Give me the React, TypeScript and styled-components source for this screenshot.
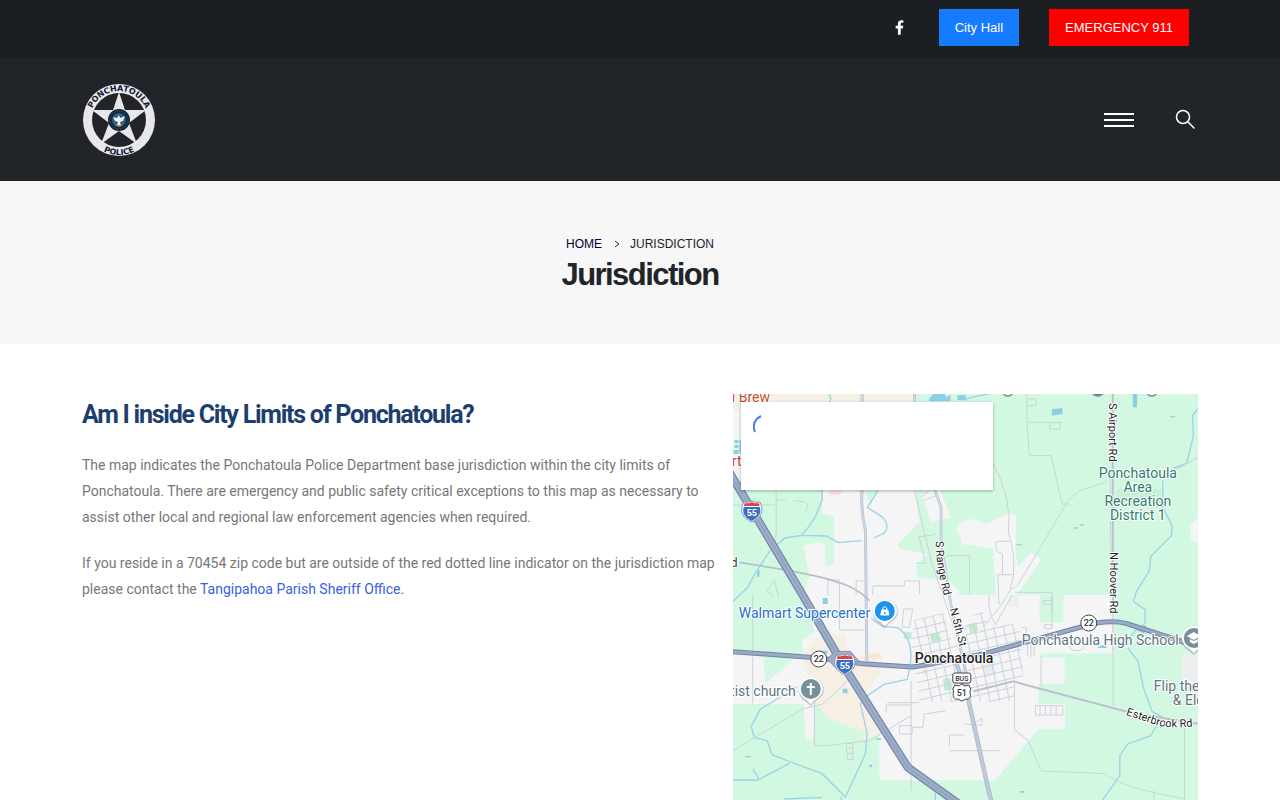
import React from "react";
import styled, { createGlobalStyle } from "styled-components";

const GlobalStyle = createGlobalStyle`
  * { box-sizing: border-box; }
  body {
    margin: 0;
    background: #fff;
    color: #777;
    font-family: Roboto, "Liberation Sans", sans-serif;
    font-size: 14px;
    line-height: 26px;
  }
  a { text-decoration: none; }
`;

const Container = styled.div`
  width: 100%;
  max-width: 1140px;
  margin: 0 auto;
  padding: 0 12px;
`;

const TopBar = styled.div`
  background: #1c1f22;
  padding: 9px 0 12px;
`;

const TopBarRow = styled(Container)`
  display: flex;
  justify-content: flex-end;
  align-items: center;
  padding-right: 21px;
`;

const SocialLink = styled.a`
  display: flex;
  align-items: center;
  justify-content: center;
  width: 30px;
  height: 36px;
  margin-right: 24px;
  color: #fff;
`;

const TopButton = styled.a<{ $tone: string }>`
  padding: 0 16px;
  background: ${(p) => p.$tone};
  color: #fff;
  font: 13px/37px "Liberation Sans", sans-serif;
  & + & { margin-left: 30px; }
`;

const Header = styled.header`
  background: #212529;
`;

const HeaderRow = styled(Container)`
  display: flex;
  align-items: center;
  min-height: 123px;
`;

const LogoLink = styled.a`
  display: flex;
  margin-right: auto;
`;

const IconButton = styled.button`
  display: flex;
  padding: 0;
  border: 0;
  background: none;
  color: #fff;
  cursor: pointer;
`;

const MenuButton = styled(IconButton)`
  flex-direction: column;
  gap: 4px;
  width: 30px;
  margin-right: 41px;
  span { height: 2px; width: 100%; background: #fff; }
`;

const SearchButton = styled(IconButton)`
  margin-right: 2px;
`;

const PageHeader = styled.section`
  display: flex;
  flex-direction: column;
  align-items: center;
  padding: 50px 0 51px;
  background: #f7f7f7;
  color: #212529;
`;

const Breadcrumb = styled.nav`
  display: flex;
  align-items: center;
  font: 12px/26px "Liberation Sans", sans-serif;
  text-transform: uppercase;
  a { color: #000033; }
  svg { margin: 0 10px 0 12px; }
`;

const PageTitle = styled.h1`
  margin: 0;
  font: bold 31px/36px "Liberation Sans", sans-serif;
  letter-spacing: -0.05em;
`;

const ContentRow = styled.main`
  display: grid;
  grid-template-columns: minmax(0, 4fr) minmax(0, 3fr);
  width: 100%;
  max-width: 1140px;
  margin: 0 auto;
  padding: 50px 0;
`;

const Column = styled.div`
  padding: 0 12px;
`;

const TextColumn = styled.div`
  padding-left: 12px;
`;

const SectionTitle = styled.h2`
  margin: 0 0 16px;
  color: #1c3f70;
  font-size: 25px;
  font-weight: 700;
  line-height: 42px;
  letter-spacing: -0.05em;
`;

const Paragraph = styled.p`
  margin: 0 0 20px;
  a { color: #3a5fe0; }
`;

const MapFrame = styled.div`
  position: relative;
  height: 450px;
  overflow: hidden;
  background: #d3f8e2;
`;

const MapDrawing = styled.svg`
  display: block;
  width: 100%;
  height: 100%;
  font-family: Roboto, sans-serif;
`;

const InfoCard = styled.div`
  position: absolute;
  top: 8px;
  left: 8px;
  width: 252px;
  height: 88px;
  padding: 12px;
  background: #fff;
  box-shadow: 0 1px 3px rgba(0, 0, 0, 0.3);
  svg { display: block; }
`;

const Label = styled.text<{ $size?: number; $weight?: number }>`
  font-size: ${(p) => p.$size ?? 14}px;
  font-weight: ${(p) => p.$weight ?? 400};
  paint-order: stroke;
  stroke: #fff;
  stroke-width: 2px;
  stroke-linejoin: round;
`;

function Logo() {
  return (
    <svg width="74" height="74" viewBox="0 0 74 74" role="img" aria-label="Ponchatoula Police">
      <defs>
        <path id="logo-top" d="M8 37a29 29 0 0 1 58 0" />
        <path id="logo-bottom" d="M2 37a35 35 0 0 0 70 0" />
      </defs>
      <circle cx="37" cy="37" r="36" fill="#e8e8ea" />
      <circle cx="37" cy="37" r="27" fill="#212529" />
      <path d="M37 9l6 18h21L47 40l8 21-18-13-18 13 8-21-17-13h21z" fill="#e8e8ea" />
      <circle cx="37" cy="37" r="11" fill="#122536" />
      <circle cx="37" cy="37" r="9" fill="none" stroke="#46647d" strokeWidth="1" strokeDasharray="1 1" />
      <circle cx="37" cy="37" r="7" fill="#275f8e" />
      <path d="M31 34l4 1 2-3 1 3 5-2-2 5-3 1 1 3h-4l1-3-3-1z" fill="#f3efe4" />
      <path d="M33 42h8l-4 2z" fill="#bd8547" />
      <g fill="#101737" fontFamily="DejaVu Sans, sans-serif" fontWeight="bold" fontSize="8" textAnchor="middle">
        <text>
          <textPath href="#logo-top" startOffset="50%">PONCHATOULA</textPath>
        </text>
        <text>
          <textPath href="#logo-bottom" startOffset="50%">POLICE</textPath>
        </text>
      </g>
    </svg>
  );
}

function Pin({ x, y, color, children }: { x: number; y: number; color: string; children: React.ReactNode }) {
  return (
    <g transform={`translate(${x} ${y})`}>
      <path d="M-12 1C-12-16 13-16 13 1c0 6-5 9-8 11l-5 5-5-4c-4-3-7-6-7-12z" fill="#777" opacity=".35" />
      <path d="M-12 0a12 12 0 0 1 24 0c0 6-5 9-8 11l-4 4-4-4c-3-2-8-5-8-11z" fill="#fff" />
      <circle r="10" fill={color} />
      {children}
    </g>
  );
}

function Interstate({ x, y }: { x: number; y: number }) {
  return (
    <g transform={`translate(${x} ${y})`}>
      <path d="M-8-9q4 1 8-1 4 2 8 1c5 9 1 16-8 20C-9 7-13 0-8-9z" fill="#fff" stroke="#8b97aa" strokeWidth="1" />
      <path d="M-8-4H8C10 3 6 7 0 10-6 7-10 3-8-4z" fill="#3b70c4" />
      <path d="M-7-8q4 1 7-1 3 2 7 1l1 3H-8z" fill="#d8464b" />
      <text y="5" textAnchor="middle" fontSize="9" fontWeight="700" fill="#fff">55</text>
    </g>
  );
}

function RouteCircle({ x, y }: { x: number; y: number }) {
  return (
    <g transform={`translate(${x} ${y})`}>
      <circle r="8" fill="#fff" stroke="#444" strokeWidth="1" />
      <text y="3" textAnchor="middle" fontSize="9" fontWeight="500" fill="#333">22</text>
    </g>
  );
}

const columns = Array.from({ length: 12 }, (_, i) => i);
const rows = Array.from({ length: 13 }, (_, i) => i);

/* Land, water and streets are plotted at three units to the pixel. */
function Terrain() {
  return (
    <g transform="scale(.33333)">
      <g fill="#f5f5f6">
        <path d="M0 0h540v25H0zM0 25h30v25H0z" fill="#f5f0e5" />
        <path d="M0 50h30v182H0zM0 170h25v110H0z" />
        <path d="M268 280H545l15 105-65 65 5 15 85 15-35 30 5 42 90 5 50 50H205l25-60-18-92 48-12 16 12 2 60 26-4V368l-37-10z" />
        <path d="M395 288h45l-28 42z" fill="#d3f8e2" />
        <path d="M565 300l55-15 35 85-60 15z" />
        <path d="M670 405q25-50 90-15l70-33 20 10-2 105 8 48 40-45 30 20-75 110 20 60H730l-25-70-20-160z" />
        <path d="M696 450l85 15 8 140h-110l-20-115z" fill="#d3f8e2" />
        <path d="M1395 375l-22 15 2 48 20 12z" />
      </g>
      <g transform="translate(0 603)">
        <path d="M215 0h930v175H925v13h70v78h-78v60h80v75h-80l-130 155H440V415l-195-55-5 75-22-5-5-103H0V172l92 15 5 80 115-100-5-30 38-27z" fill="#f5f5f6" />
        <path d="M920-10h72v92h-72zM992 325h-72v-50h5z" fill="#d3f8e2" />
        <path d="M245 130l90-15 15 65 80 10 15 45-60 75 60 105-45 20-150-65-10-100-35-80z" fill="#f6efe4" />
        <path d="M245 320l40 48 120 48-50 25-110 12z" fill="#d3f8e2" />
        <path d="M1346 175h49v90h-49z" fill="#eceeef" />
        <path d="M830 0h28v36h-32z" fill="#eceeef" />
        <path d="M590 118l28-6 8 24-28 8zM630 253l22-5 8 35-24 5zM706 88l25-5 5 25-24 8zM514 112h22v20h-22z" fill="#bfecd0" />
        <path d="M746 210l36-7 8 36-34 9z" fill="#e9ebee" />
        <path d="M568 225h20v12h-20zM404 180l32-10 15 20-30 5z" fill="#f8e9d4" />
      </g>
      <path d="M1150 285h135v55h-135z" fill="#c5f1d7" />
      <path d="M290 290h35v12h-35z" fill="#f8dedb" />

      <g fill="#8bcfe4">
        <path d="M590 12l12-12h34l5 10 12-8v20h-65zM674 4h25v15h-25zM957 46l32-4v18l-32 5zM1200 0h13v40h-13zM1308 68l22-3-9 6zM1018 402l18-4-4 8zM1038 394l14-5-1 8zM848 451h20v3h-20z" />
        <path d="M5 138h12v10H5zM5 153h12v10H5zM2 168h16v12H2zM20 138h8v40h-8z" />
        <path d="M270 612h15v18h-15zM262 770h22v10h-22zM330 884h14v14h-14zM36 1086h18v4H36zM430 1033h16v4h-16zM409 1112h9v7h-9zM1094 762q15-18 30 0zM1240 692l-30 15 24 14zM73 528h7v20h-7zM862 1191h12v5h-12z" />
      </g>
      <g fill="none" stroke="#9bd3e6" strokeWidth="4">
        <path d="M268 288v30l-20 50-20 30-22 26-50 8-46 40-45 70-20 38-45 43M206 424l75 2 35 20 70-6M436 290l-32 50 46 30q25 30 0 50l-28 12" />
        <path d="M696 16l30-8 40-8M1394 45l-15 20 3 60-20 82-40 16M1290 260v80l28 55-2 30-62 62-5 45-38 60-9 30 35 25v40l-30 23-28 35M1185 762l31 40 16 80 26 70 30 18-35 55-68 25-24 35v60l-48 68-22 50" />
        <path d="M415 673l35 25 45 3q60 40 28 155l-70 15-50 35-20 23 20 90-5 60-60 130-70-70-95-35-55-22-15-42-38-10-10-33 28-52 60-36M0 1158h75l95-50M60 1125l18 28M325 1208v35M155 1215l110-5v3M608 1185v55" />
        <path d="M290 0l4 15-8 20M0 0l20-2" />
      </g>

      <g fill="none" stroke="#cbd2dc" strokeWidth="3">
        <path d="M130 285v135l-5 45M0 333h125M130 318h28M182 320q60 2 35 35M125 560l-22 30 20 20M125 560l12 50M285 603v-45h35v45M370 603v-42h22M420 603v-27h95v-15h45v40M550 508h27v-5l-18-74 50-8M545 290l50 210 70 205M565 310l25-20M570 320l48-18M640 485h70v115" />
        <path d="M882 0v85l8 100h65l33 145h22M887 85h96v20h-32V86M887 15h22v20h-22M780 205q60 115 47 210 20 60 15 130l-10 40M832 542h-37l4 90M790 442h40M790 442v28l19 10v62h35M847 595h110v60" />
        <path d="M1123 262l-85 30-30 25-155 260-20 10-30 50-50 60M1132 255l2 230M1141 645v290M1141 770V650M1395 190l-62 35" />
        <path d="M60 603v325M245 1055V900M0 1070l210-125 60-15 60-55q10-15 28-35M245 1055h35l130-15M340 1048h20v48h-15zM345 1062h18M345 1078h18M410 1040l125-75M500 995h38v25h-38zM460 955v-22h75M535 860v330M540 1000h30l5-40 65-10M650 1055v-32h46M650 1070h150M320 603v105M320 708h80M512 645h28l-10 55h-22z" />
        <path d="M925 785v90M958 603v92M931 620h28v12h-28zM935 692h22v12h-22zM845 868v140l40 30 40 93 190 8q60 45 240 75M1355 1000v240M908 935h82v28h-82zM922 935v28M938 935v28M954 935v28M970 935v28M1264 1190v55M1012 755q-5 15 25 15 20-2 15-18" />
        <path d="M770 603q-8 45 18 90L838 603M155 905q40-5 50-25h-38M696 990l52 4-1-20-25 15M871 735h25l-2 55M884 735v50M904 740v48M463 926h96M866 700h15v30" />
      </g>
      <clipPath id="grid-clip">
        <path d="M546 678l85-20 25 80h45l-5-50 30-5-5-20 30-10 15 47 75-10 19 10 11 148-30 10 5 65H561l-25-183z" />
      </clipPath>
      <g clipPath="url(#grid-clip)" stroke="#cbd2dc" strokeWidth="3">
        {columns.map((i) => (
          <path key={i} d={`M${538 + i * 29} 640l62 290`} />
        ))}
        {rows.map((i) => (
          <path key={i} d={`M530 ${682 + i * 27}l350 -82`} />
        ))}
      </g>

      <g fill="none" strokeLinejoin="round">
        <path d="M388 0v285q-5 60 10 125l4 390" stroke="#b8c3d1" strokeWidth="9" />
        <path d="M388 0v285q-5 60 10 125l4 390" stroke="#cfd7e2" strokeWidth="5" />
        <path d="M545 0v70l60 215 20 55v110l30 185 50 225" stroke="#b7c1d0" strokeWidth="8" />
        <path d="M545 0v70l60 215 20 55v110l30 185 50 225" stroke="#d4dbe5" strokeWidth="4" />
        <path d="M20 505l150 25q110 20 175 45 40 18 65 45" stroke="#b7bfcb" strokeWidth="5" />
        <path d="M1140 0v640M722 892l120-30 35 10 320 85 198 32" stroke="#bac2cd" strokeWidth="6" />
        <path d="M0 773l250 18 140 18 150 10 60-10 155-30 300-83q70-20 125-8l200 65h22" stroke="#7186a6" strokeWidth="15" />
        <path d="M0 773l250 18 140 18 150 10 60-10 155-30 300-83q70-20 125-8l200 65h22" stroke="#9aaac5" strokeWidth="9" />
        <path d="M665 790l40 120 60 270 15 60" stroke="#a9b5c9" strokeWidth="13" />
        <path d="M665 790l40 120 60 270 15 60" stroke="#c0cbdc" strokeWidth="8" />
        <path d="M-10 235l215 360 130 225 190 300 160 115 90 60" stroke="#7186a6" strokeWidth="25" />
        <path d="M-10 235l215 360 130 225 190 300 160 115 90 60" stroke="#9cacc9" strokeWidth="18" />
        <path d="M-10 235l215 360 130 225 190 300 160 115 90 60" stroke="#8b9dbc" strokeWidth="3" />
        <path d="M283 794l26-22h44l24 28-20 22h-48z" fill="#9cacc9" stroke="#8496b4" strokeWidth="3" />
      </g>
    </g>
  );
}

function JurisdictionMap() {
  return (
    <MapFrame>
      <MapDrawing viewBox="0 0 465 450" preserveAspectRatio="xMidYMid slice" role="img" aria-label="Map of Ponchatoula">
        <defs>
          <path id="range-rd" d="M203 147c0 20 4 38 10 62" />
          <path id="fifth-st" d="M217 215l13 50" />
          <path id="esterbrook" d="M393 321q16 5 31 10 14 4 40 1" />
        </defs>
        <Terrain />

        <Label x="-1" y="8" fill="#c5501f">l Brew</Label>
        <Label x="-1" y="72" fill="#d33a3f">rth</Label>
        <Label $size={12} x="-2" y="173" fill="#333">d</Label>
        <g fill="#222">
          <Label $size={11}><textPath href="#range-rd">S Range Rd</textPath></Label>
          <Label $size={11}><textPath href="#fifth-st">N 5th St</textPath></Label>
          <Label $size={11}><textPath href="#esterbrook">Esterbrook Rd</textPath></Label>
          <Label $size={11} transform="translate(376 9) rotate(90)">S Airport Rd</Label>
          <Label $size={11} transform="translate(377 158) rotate(90)">N Hoover Rd</Label>
        </g>
        <g fill="#2f7d6c" textAnchor="middle">
          <Label x="405" y="84">Ponchatoula</Label>
          <Label x="405" y="98">Area</Label>
          <Label x="405" y="112">Recreation</Label>
          <Label x="405" y="126">District 1</Label>
        </g>
        <Label x="6" y="224" fill="#2372c9">Walmart Supercenter</Label>
        <Label $weight={500} x="182" y="269" fill="#222">Ponchatoula</Label>
        <g fill="#5f7480">
          <Label x="289" y="251">Ponchatoula High School</Label>
          <Label x="63" y="302" textAnchor="end">tist church</Label>
          <Label x="421" y="297">Flip the</Label>
          <Label x="440" y="311">&amp; Ele</Label>
        </g>

        <Interstate x={19} y={117} />
        <Interstate x={112} y={270} />
        <RouteCircle x={86} y={265} />
        <RouteCircle x={356} y={229} />
        <g stroke="#444" fill="#fff">
          <rect x="220" y="279" width="18" height="10" rx="2" />
          <path d="M222 291l4 1 3-2 3 2 4-1 2 4-1 3c2 5-1 8-4 7l-4 2-4-2c-3 1-6-2-4-7l-1-3z" />
        </g>
        <g fill="#333" textAnchor="middle" fontWeight="500">
          <text x="229" y="287" fontSize="7">BUS</text>
          <text x="229" y="302" fontSize="9">51</text>
        </g>

        <Pin x={152} y={217} color="#1a94f0">
          <path d="M-3-1h6l1 5h-8z" fill="#fff" stroke="#fff" strokeWidth="1" strokeLinejoin="round" />
          <path d="M-2-1v-2q2-3 4 0v2" fill="none" stroke="#fff" strokeWidth="1" />
          <circle cy="2" r="1" fill="#1a94f0" />
        </Pin>
        <Pin x={78} y={295} color="#78909c">
          <path d="M0-6V6M-4-2h8" stroke="#fff" strokeWidth="2" />
        </Pin>
        <Pin x={461} y={244} color="#78909c">
          <path d="M-7-2l7-4 7 4-7 4zM-4 1v3l4 2 4-2V1L0 3z" fill="#fff" />
        </Pin>
        <g fill="#fff" stroke="#90989f" strokeWidth="2">
          <circle cx="275" cy="-3" r="5" />
          <circle cx="365" cy="-4" r="6" fill="#4565ac" />
          <circle cx="419" cy="-3" r="5" />
        </g>
      </MapDrawing>
      <InfoCard>
        <svg width="20" height="26" viewBox="0 0 20 26" aria-hidden="true">
          <path d="M2 18C-1 11 2 5 8 2" fill="none" stroke="#4a7fe0" strokeWidth="2" />
        </svg>
      </InfoCard>
    </MapFrame>
  );
}

export default function App() {
  return (
    <>
      <GlobalStyle />
      <TopBar>
        <TopBarRow>
          <SocialLink href="#" aria-label="Facebook">
            <svg width="9" height="15" viewBox="0 0 320 512" fill="currentColor" aria-hidden="true">
              <path d="M279 288l14-93h-89v-60c0-25 12-50 52-50h41V7s-37-7-72-7c-73 0-121 44-121 125v70H23v93h81v224h100V288z" />
            </svg>
          </SocialLink>
          <TopButton href="#" $tone="#167cff">City Hall</TopButton>
          <TopButton href="#" $tone="#ff0000">EMERGENCY 911</TopButton>
        </TopBarRow>
      </TopBar>
      <Header>
        <HeaderRow>
          <LogoLink href="#"><Logo /></LogoLink>
          <MenuButton type="button" aria-label="Menu">
            <span /><span /><span />
          </MenuButton>
          <SearchButton type="button" aria-label="Search">
            <svg width="21" height="21" viewBox="0 0 21 21" fill="none" stroke="currentColor" strokeWidth="1.500" strokeLinecap="round" aria-hidden="true">
              <circle cx="8" cy="8" r="6.500" />
              <path d="M13 13l6 6" />
            </svg>
          </SearchButton>
        </HeaderRow>
      </Header>
      <PageHeader>
        <Breadcrumb aria-label="Breadcrumb">
          <a href="#">Home</a>
          <svg width="6" height="8" viewBox="0 0 6 8" fill="none" stroke="#212529" aria-hidden="true">
            <path d="M1 1l4 3-4 3" />
          </svg>
          <span>Jurisdiction</span>
        </Breadcrumb>
        <PageTitle>Jurisdiction</PageTitle>
      </PageHeader>
      <ContentRow>
        <TextColumn>
          <SectionTitle>Am I inside City Limits of Ponchatoula?</SectionTitle>
          <Paragraph>
            The map indicates the Ponchatoula Police Department base jurisdiction within the city limits of
            Ponchatoula. There are emergency and public safety critical exceptions to this map as necessary to
            assist other local and regional law enforcement agencies when required.
          </Paragraph>
          <Paragraph>
            If you reside in a 70454 zip code but are outside of the red dotted line indicator on the jurisdiction map
            please contact the <a href="#">Tangipahoa Parish Sheriff Office.</a>
          </Paragraph>
        </TextColumn>
        <Column>
          <JurisdictionMap />
        </Column>
      </ContentRow>
    </>
  );
}
